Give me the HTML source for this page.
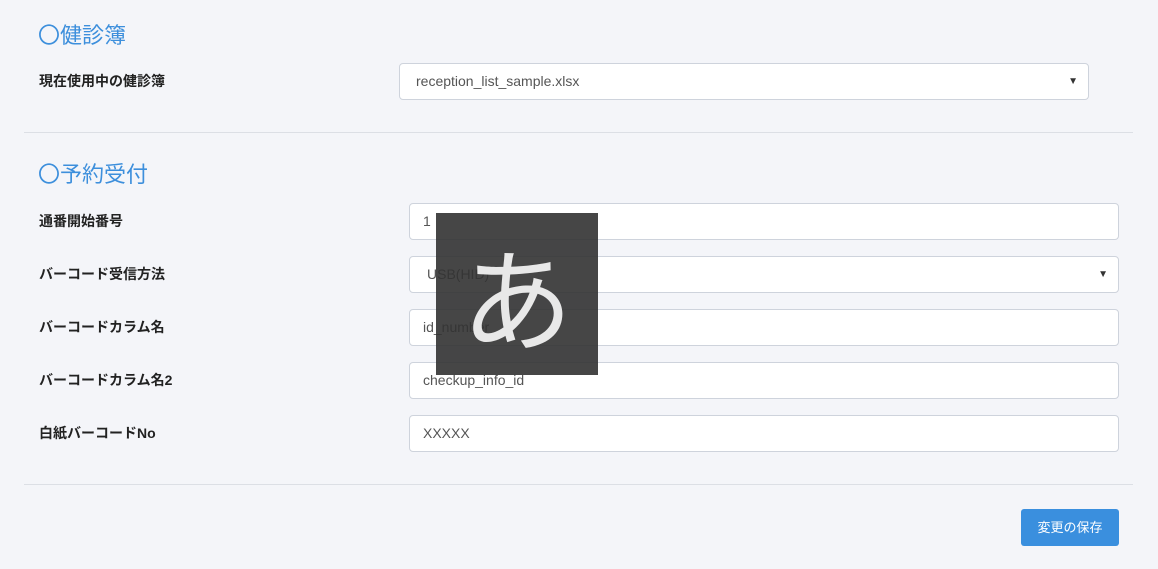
<!DOCTYPE html>
<html><head><meta charset="utf-8"><style>
body{margin:0;width:1158px;height:569px;background:#f4f5f9;font-family:"Liberation Sans","Noto Sans CJK JP",sans-serif;position:relative;overflow:hidden;color:#333}
.h{position:absolute;left:38px;font-size:22px;color:#3d8fdc;line-height:1}
.l{position:absolute;left:39px;font-size:14px;font-weight:bold;color:#222;line-height:1}
.i{position:absolute;background:#fff;border:1px solid #ced3dc;border-radius:4px;box-sizing:border-box;height:37px;font-size:14px;color:#555;line-height:35px;padding-left:13px}
.s::after{content:"▼";position:absolute;right:10px;top:0;font-size:10px;color:#333}
.hr{position:absolute;left:24px;width:1109px;height:1px;background:#dcdfe5}
</style></head><body>
<div class="h" style="top:25px">〇健診簿</div>
<div class="l" style="top:74px">現在使用中の健診簿</div>
<div class="i s" style="left:399px;top:63px;width:690px;padding-left:16px">reception_list_sample.xlsx</div>
<div class="hr" style="top:132px"></div>
<div class="h" style="top:164px">〇予約受付</div>
<div class="l" style="top:214px">通番開始番号</div>
<div class="l" style="top:267px">バーコード受信方法</div>
<div class="l" style="top:320px">バーコードカラム名</div>
<div class="l" style="top:373px">バーコードカラム名2</div>
<div class="l" style="top:426px">白紙バーコードNo</div>
<div class="i" style="left:409px;top:203px;width:710px">1</div>
<div class="i s" style="left:409px;top:256px;width:710px;padding-left:17px">USB(HID)</div>
<div class="i" style="left:409px;top:309px;width:710px">id_number</div>
<div class="i" style="left:409px;top:362px;width:710px">checkup_info_id</div>
<div class="i" style="left:409px;top:415px;width:710px">XXXXX</div>
<div class="hr" style="top:484px"></div>
<div style="position:absolute;left:1021px;top:509px;width:98px;height:37px;background:#3a8fde;border-radius:3px;color:#fff;font-size:13px;line-height:37px;text-align:center">変更の保存</div>
<div style="position:absolute;left:436px;top:213px;width:162px;height:162px;background:rgba(50,50,50,0.9);color:#e8e8e8;font-size:112px;line-height:162px;text-align:center;font-family:'Noto Sans CJK JP',sans-serif">あ</div>
</body></html>
